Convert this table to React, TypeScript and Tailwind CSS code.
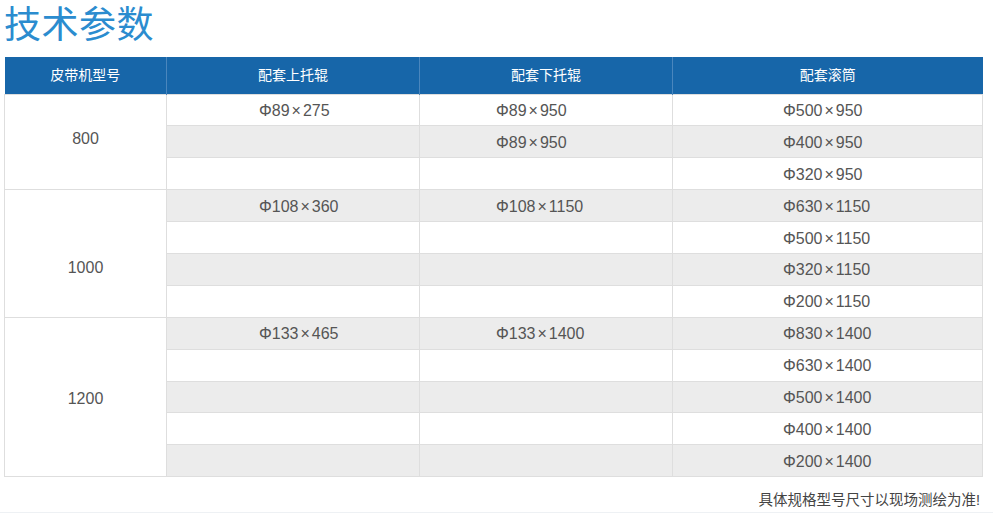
const groups = [
  {
    model: "800",
    offset: "pb-[6px]",
    rows: [
      ["Φ89×275", "Φ89×950", "Φ500×950"],
      ["", "Φ89×950", "Φ400×950"],
      ["", "", "Φ320×950"],
    ],
  },
  {
    model: "1000",
    offset: "pt-[29px]",
    rows: [
      ["Φ108×360", "Φ108×1150", "Φ630×1150"],
      ["", "", "Φ500×1150"],
      ["", "", "Φ320×1150"],
      ["", "", "Φ200×1150"],
    ],
  },
  {
    model: "1200",
    offset: "pt-[5px]",
    rows: [
      ["Φ133×465", "Φ133×1400", "Φ830×1400"],
      ["", "", "Φ630×1400"],
      ["", "", "Φ500×1400"],
      ["", "", "Φ400×1400"],
      ["", "", "Φ200×1400"],
    ],
  },
];

const pads = ["pl-[92px]", "pl-[76px]", "pl-[110px]"];

function Spec({ text }: { text: string }) {
  if (!text) return null;
  const [a, b] = text.slice(1).split("×");
  return (
    <span className="whitespace-nowrap">
      Φ{a}
      <span className="mx-[2px]">×</span>
      {b}
    </span>
  );
}

export default function App() {
  let idx = 0;
  return (
    <div
      className="w-[993px] h-[514px] bg-white overflow-hidden"
      style={{ fontFamily: '"Liberation Sans", "Noto Sans CJK SC", sans-serif' }}
    >
      <div className="border-b border-[#eef1f4] h-[513px] px-[4px] pt-[6px]">
        <h1 className="text-[37px] leading-none text-[#2b8ccf] tracking-[0.5px] h-[51px] pt-[1px] font-normal">
          技术参数
        </h1>

        <table className="w-[979px] border-collapse table-fixed text-[#555] text-[16px]">
          <colgroup>
            <col className="w-[162px]" />
            <col className="w-[253px]" />
            <col className="w-[253px]" />
            <col />
          </colgroup>
          <thead>
            <tr className="h-[37px] bg-[#1766a9] text-white text-[14px]">
              <th className="font-normal border-r border-[#4a86bd]">皮带机型号</th>
              <th className="font-normal border-r border-[#4a86bd]">配套上托辊</th>
              <th className="font-normal border-r border-[#4a86bd]">配套下托辊</th>
              <th className="font-normal">配套滚筒</th>
            </tr>
          </thead>
          <tbody>
            {groups.map((g) =>
              g.rows.map((r, i) => {
                const gray = idx++ % 2 === 1;
                return (
                  <tr key={g.model + i} className="h-[31.9px]">
                    {i === 0 && (
                      <td
                        rowSpan={g.rows.length}
                        className={`border border-[#dedede] bg-white text-center align-middle ${g.offset}`}
                      >
                        {g.model}
                      </td>
                    )}
                    {r.map((c, j) => (
                      <td
                        key={j}
                        className={`border border-[#dedede] align-middle pt-[2px] leading-[18px] ${pads[j]} ${
                          gray ? "bg-[#ececec]" : "bg-white"
                        }`}
                      >
                        <Spec text={c} />
                      </td>
                    ))}
                  </tr>
                );
              })
            )}
          </tbody>
        </table>

        <p className="mt-[13px] text-right pr-[9px] text-[14.5px] text-[#444]">
          具体规格型号尺寸以现场测绘为准!
        </p>
      </div>
    </div>
  );
}
